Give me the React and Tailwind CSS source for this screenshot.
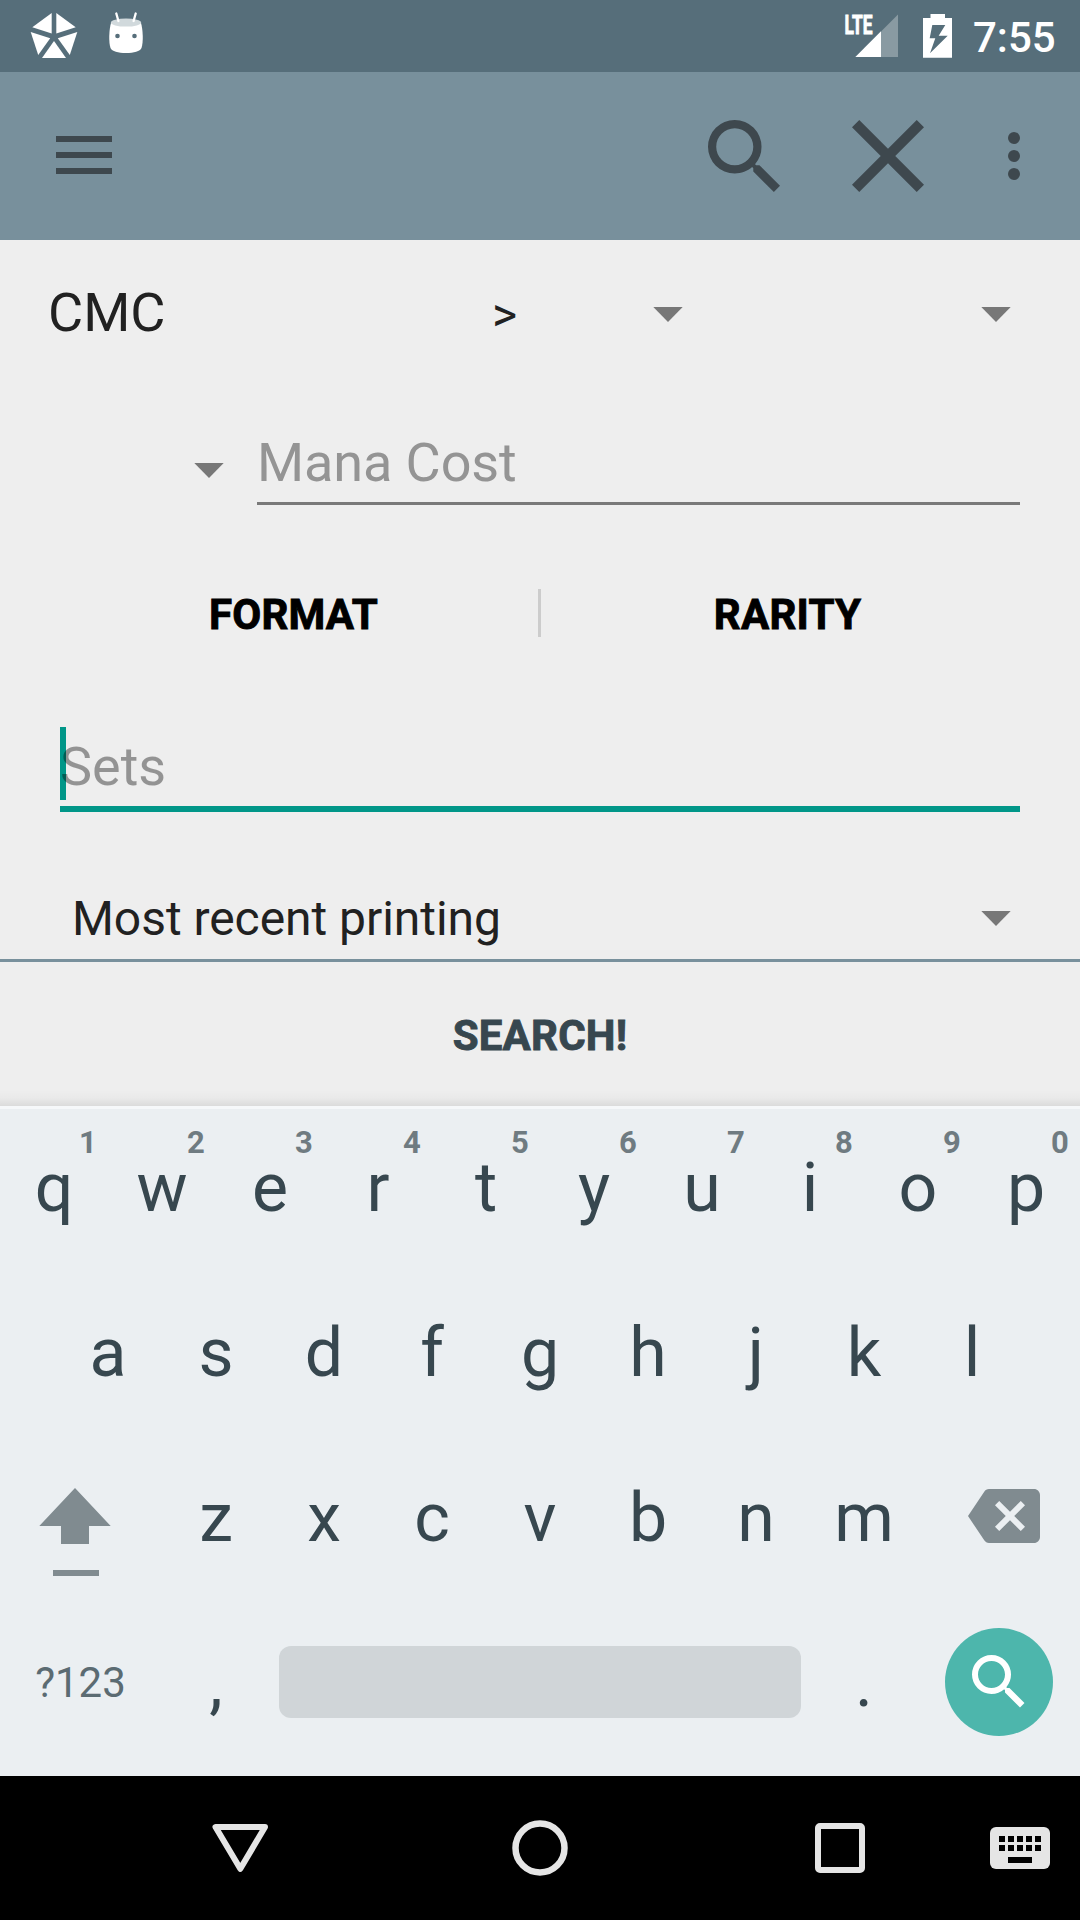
const SEARCH_PATH =
  "M15.5 14h-.79l-.28-.27A6.471 6.471 0 0 0 16 9.5 6.5 6.5 0 1 0 9.5 16c1.61 0 3.09-.59 4.23-1.57l.27.28v.79l5 4.99L20.49 19l-4.99-5zm-6 0C7.01 14 5 11.99 5 9.5S7.01 5 9.5 5 14 7.01 14 9.5 11.99 14 9.5 14z";

function Caret({ className = "" }) {
  return (
    <svg className={`h-[15px] w-[30px] shrink-0 ${className}`} viewBox="0 0 30 15">
      <path d="M0.3 0H29.7L15 15z" fill="#777777" />
    </svg>
  );
}

function StatusBar() {
  return (
    <header className="flex h-[72px] items-start justify-between bg-[#566e7a]">
      <svg className="h-[72px] w-[160px]" viewBox="0 0 160 72">
        <g fill="#fff">
          <path d="M51.7 13V33.6L32.3 27.3z" />
          <path d="M56.3 13V33.6L75.7 27.3z" />
          <path d="M30.7 32L50.2 38.2L38.2 55z" />
          <path d="M77.3 32L57.8 38.2L69.8 55z" />
          <path d="M54 41L42 58H66z" />
          <path d="M111 23C109 30 108.500 42 110.500 48C112 51.500 118 53 126 53S140 51.500 141.500 48C143.500 42 143 30 141 23z" />
        </g>
        <ellipse cx="126" cy="22.600" rx="15.200" ry="4" fill="#d1d9dc" />
        <path d="M116.300 13.500L118.400 21M135.700 13.500L133.600 21" stroke="#fff" strokeWidth="2.300" strokeLinecap="round" />
        <circle cx="117.500" cy="36" r="2.300" fill="#566e7a" />
        <circle cx="134.500" cy="36" r="2.300" fill="#566e7a" />
      </svg>
      <div className="flex">
        <svg className="h-[72px] w-[120px]" viewBox="840 0 120 72">
          <text x="844.500" y="33.500" fontSize="26" fontWeight="700" fill="#fff" stroke="#fff" strokeWidth="0.9" textLength="28" lengthAdjust="spacingAndGlyphs">LTE</text>
          <path d="M881 31.500L898 14.500V57H881z" fill="#899aa2" />
          <path d="M855.300 57L881 31.300V57z" fill="#fff" />
          <path d="M930.500 14H945V18H952V57.700H923V18H930.500zM932.300 25L929.700 38.300H935.300L930 53.300L947.700 35.700H938.700L945.300 25z" fill="#fff" fillRule="evenodd" />
        </svg>
        <span className="w-[120px] pl-[13px] pt-[8px] text-[42px] leading-[60px] font-medium text-white">7:55</span>
      </div>
    </header>
  );
}

function AppBar() {
  return (
    <nav className="flex h-[168px] items-start bg-[#78909c] pl-14 text-[#3e484e]">
      <div className="mt-16 flex w-14 flex-col gap-2.5">
        <span className="h-1.5 bg-current" />
        <span className="h-1.5 bg-current" />
        <span className="h-1.5 bg-current" />
      </div>
      <svg className="mt-12 ml-[596px] size-[72px]" viewBox="3 3 17.49 17.49" fill="currentColor">
        <path d={SEARCH_PATH} />
      </svg>
      <svg className="mt-12 ml-[72px] size-[72px]" viewBox="5 5 14 14" fill="currentColor">
        <path d="M19 6.41L17.590 5 12 10.590 6.410 5 5 6.410 10.590 12 5 17.590 6.410 19 12 13.410 17.590 19 19 17.590 13.410 12z" />
      </svg>
      <div className="mt-[60px] ml-[84px] flex flex-col gap-1.5">
        <span className="size-3 rounded-full bg-current" />
        <span className="size-3 rounded-full bg-current" />
        <span className="size-3 rounded-full bg-current" />
      </div>
    </nav>
  );
}

function SearchForm() {
  return (
    <main className="flex h-[866px] flex-col bg-[#eeeeee] text-[#212121]">
      <div className="flex h-[145px] items-center">
        <span className="w-[444px] pl-12 text-[54px] leading-[64px]">CMC</span>
        <span className="w-[209px] pl-12 pt-[4px] text-[48px] leading-[56px]">&gt;</span>
        <Caret className="mt-1" />
        <Caret className="mt-1 ml-[298px]" />
      </div>

      <div className="flex h-[156px] items-start">
        <Caret className="mt-[78px] ml-[194px]" />
        <div className="ml-[33px] mt-[29px] h-[91px] w-[763px] border-b-[3px] border-[#797979] pt-[17px] text-[54px] leading-[64px] tracking-[-0.1px] text-[#949494]">
          Mana Cost
        </div>
      </div>

      <div className="flex h-[147px] items-center text-[42px] leading-[50px] font-bold tracking-[0.2px] text-black [-webkit-text-stroke:0.9px_currentColor]">
        <div className="w-[538px] pl-[49px] text-center">FORMAT</div>
        <div className="-mt-[3px] h-12 w-[3px] bg-[#cccccc]" />
        <div className="w-[539px] pr-[46px] text-center">RARITY</div>
      </div>

      <div className="flex h-[157px] items-start">
        <div className="mt-[39px] ml-[60px] flex h-[85px] w-[960px] items-start border-b-[6px] border-[#009688]">
          <span className="h-[73px] w-1.5 shrink-0 bg-[#009688]" />
          <span className="-ml-1.5 pt-[8px] text-[54px] leading-[64px] text-black/38">Sets</span>
        </div>
      </div>

      <div className="flex h-[117px] items-center justify-between border-b-[3px] border-[#78909c] pt-[33px] pr-[69px] pl-[72px]">
        <span className="text-[48px] leading-[56px] tracking-[-0.05px]">Most recent printing</span>
        <Caret />
      </div>

      <div className="flex flex-1 items-center justify-center pt-[3px] text-[42px] leading-[50px] font-bold tracking-[0.2px] text-[#37474f] [-webkit-text-stroke:0.9px_currentColor]">
        SEARCH!
      </div>
      <div className="-mt-4 h-4 bg-linear-to-b from-black/0 via-black/2 to-black/8" />
    </main>
  );
}

function Key({ label, hint }) {
  return (
    <div className="relative flex h-[165px] w-[108px] items-center justify-center">
      {label}
      {hint && (
        <span className="absolute top-[19px] left-[58px] w-[60px] text-center text-[31px] leading-[38px] font-bold text-[#6f7b81]">{hint}</span>
      )}
    </div>
  );
}

function Keyboard() {
  return (
    <section className="h-[670px] overflow-hidden border-t-[3px] border-[#f6f8fa] bg-[#ebeff2] text-[68px] leading-[80px] text-[#37474f]">
      <div className="-mt-[4px] flex">
        {[..."qwertyuiop"].map((k, i) => (
          <Key key={k} label={k} hint={String((i + 1) % 10)} />
        ))}
      </div>
      <div className="flex justify-center">
        {[..."asdfghjkl"].map((k) => (
          <Key key={k} label={k} />
        ))}
      </div>
      <div className="flex">
        <div className="w-[162px]">
          <svg className="mt-[53px] ml-[39px] h-[88px] w-[72px]" viewBox="39 1488 72 88" fill="#808b90">
            <path d="M75 1488L110.700 1526H89V1544H61V1526H39.300z" />
            <path d="M53 1570H99V1576H53z" />
          </svg>
        </div>
        {[..."zxcvbnm"].map((k) => (
          <Key key={k} label={k} />
        ))}
        <svg className="mt-[54px] ml-[50px] h-[54px] w-[72px]" viewBox="0 3 24 18" fill="#808b90">
          <path d="M22 3H7c-.69 0-1.230.350-1.590.880L0 12l5.410 8.110c.360.530.900.890 1.590.890h15c1.100 0 2-.900 2-2V5c0-1.100-.900-2-2-2zm-3 12.590L17.590 17 14 13.410 10.410 17 9 15.590 12.590 12 9 8.410 10.410 7 14 10.590 17.590 7 19 8.410 15.410 12 19 15.590z" />
        </svg>
      </div>
      <div className="flex items-center">
        <span className="w-[162px] pr-px text-center text-[42px] leading-[50px] text-[#5b6b72]">?123</span>
        <Key label="," />
        <div className="mx-[9px] -mt-[2px] h-[72px] w-[522px] rounded-xl bg-[#d0d5d8]" />
        <Key label="." />
        <div className="-mt-[2px] ml-[27px] flex size-[108px] items-center justify-center rounded-full bg-[#4db6ac]">
          <svg className="size-[72px]" viewBox="0 0 24 24" fill="#fff">
            <path d={SEARCH_PATH} />
          </svg>
        </div>
      </div>
    </section>
  );
}

function NavigationBar() {
  return (
    <footer className="flex h-[144px] items-center bg-black">
      <svg className="ml-[210px] size-[60px]" viewBox="210 1818 60 60" fill="none" stroke="#e5e5e5" strokeWidth="6" strokeLinejoin="round">
        <path d="M215.500 1827H265L240.300 1868.800z" />
      </svg>
      <svg className="ml-[240px] size-[60px]" viewBox="0 0 60 60" fill="none" stroke="#e5e5e5" strokeWidth="6.500">
        <circle cx="30" cy="30" r="24.500" />
      </svg>
      <div className="ml-[245px] size-[50px] rounded-[5px] border-[6px] border-[#e5e5e5]" />
      <div className="ml-[125px] flex h-[42px] w-[60px] flex-col items-center gap-[3px] rounded-md bg-[#e5e5e5] pt-[9px]">
        {[0, 1].map((row) => (
          <div key={row} className="flex gap-[3px]">
            {[0, 1, 2, 3, 4].map((k) => (
              <span key={k} className="size-1.5 bg-black" />
            ))}
          </div>
        ))}
        <span className="mt-[3px] h-1.5 w-6 bg-black" />
      </div>
    </footer>
  );
}

export default function App() {
  return (
    <div className="flex h-[1920px] w-[1080px] flex-col overflow-hidden font-['Roboto',sans-serif]">
      <StatusBar />
      <AppBar />
      <SearchForm />
      <Keyboard />
      <NavigationBar />
    </div>
  );
}
